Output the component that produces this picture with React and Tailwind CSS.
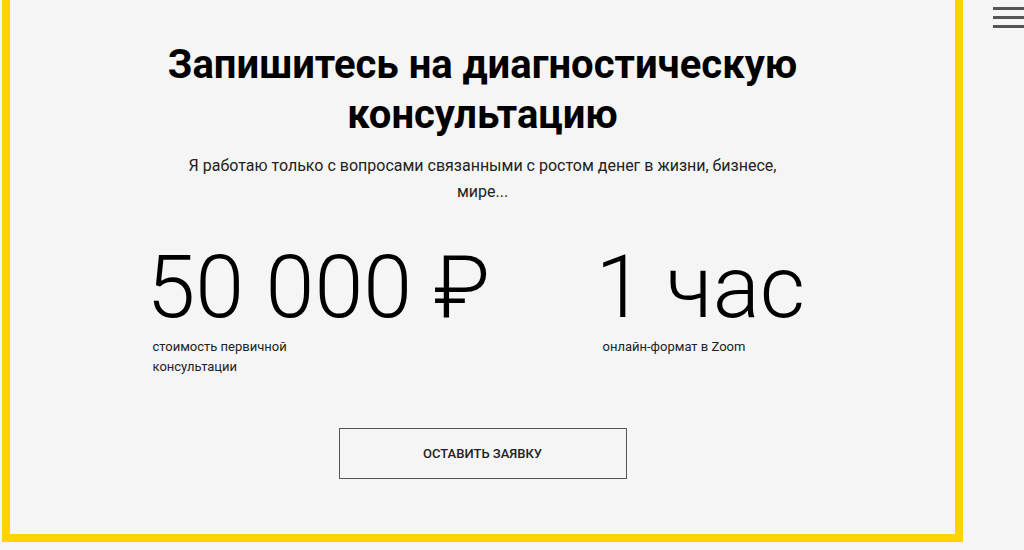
import React from 'react';

export default function App() {
    return (
        <div
            className="relative w-[1024px] h-[550px] overflow-hidden bg-[#f5f5f5] text-black"
            style={{ fontFamily: 'Roboto, "Noto Sans", sans-serif' }}
        >
            {/* Menu button */}
            <button className="absolute top-[7px] left-[993px] flex flex-col gap-[6px]">
                <span className="block w-[36px] h-[3px] bg-[#555]" />
                <span className="block w-[36px] h-[3px] bg-[#555]" />
                <span className="block w-[36px] h-[3px] bg-[#555]" />
            </button>

            {/* Framed block */}
            <div className="ml-[2px] w-[961px] h-[542px] border-x-8 border-b-8 border-[#ffd200] flex flex-col items-center pt-[40px]">
                <h1 className="text-[40px] leading-[50px] font-bold text-center text-black">
                    Запишитесь на диагностическую
                    <br />
                    консультацию
                </h1>
                <p className="mt-[13px] w-[600px] text-center text-[16px] leading-[26px] text-[#222]">
                    Я работаю только с вопросами связанными с ростом денег в жизни, бизнесе, мире...
                </p>

                {/* Price / duration */}
                <div className="mt-[39px] w-[660px] flex">
                    <div className="w-[448px]">
                        <div className="-ml-[6px] text-[88px] leading-[86px] font-light">50 000 ₽</div>
                        <div className="mt-[7px] w-[180px] text-[13px] leading-[20px] text-[#222]">
                            стоимость первичной консультации
                        </div>
                    </div>
                    <div className="flex-1">
                        <div className="-ml-[5px] text-[88px] leading-[86px] font-light">1 час</div>
                        <div className="mt-[7px] pl-[2px] text-[13px] leading-[20px] text-[#222]">
                            онлайн-формат в Zoom
                        </div>
                    </div>
                </div>

                <button className="mt-[51px] w-[288px] h-[51px] border border-[#555] text-[13px] font-medium uppercase text-[#222]">
                    Оставить заявку
                </button>
            </div>
        </div>
    );
}
